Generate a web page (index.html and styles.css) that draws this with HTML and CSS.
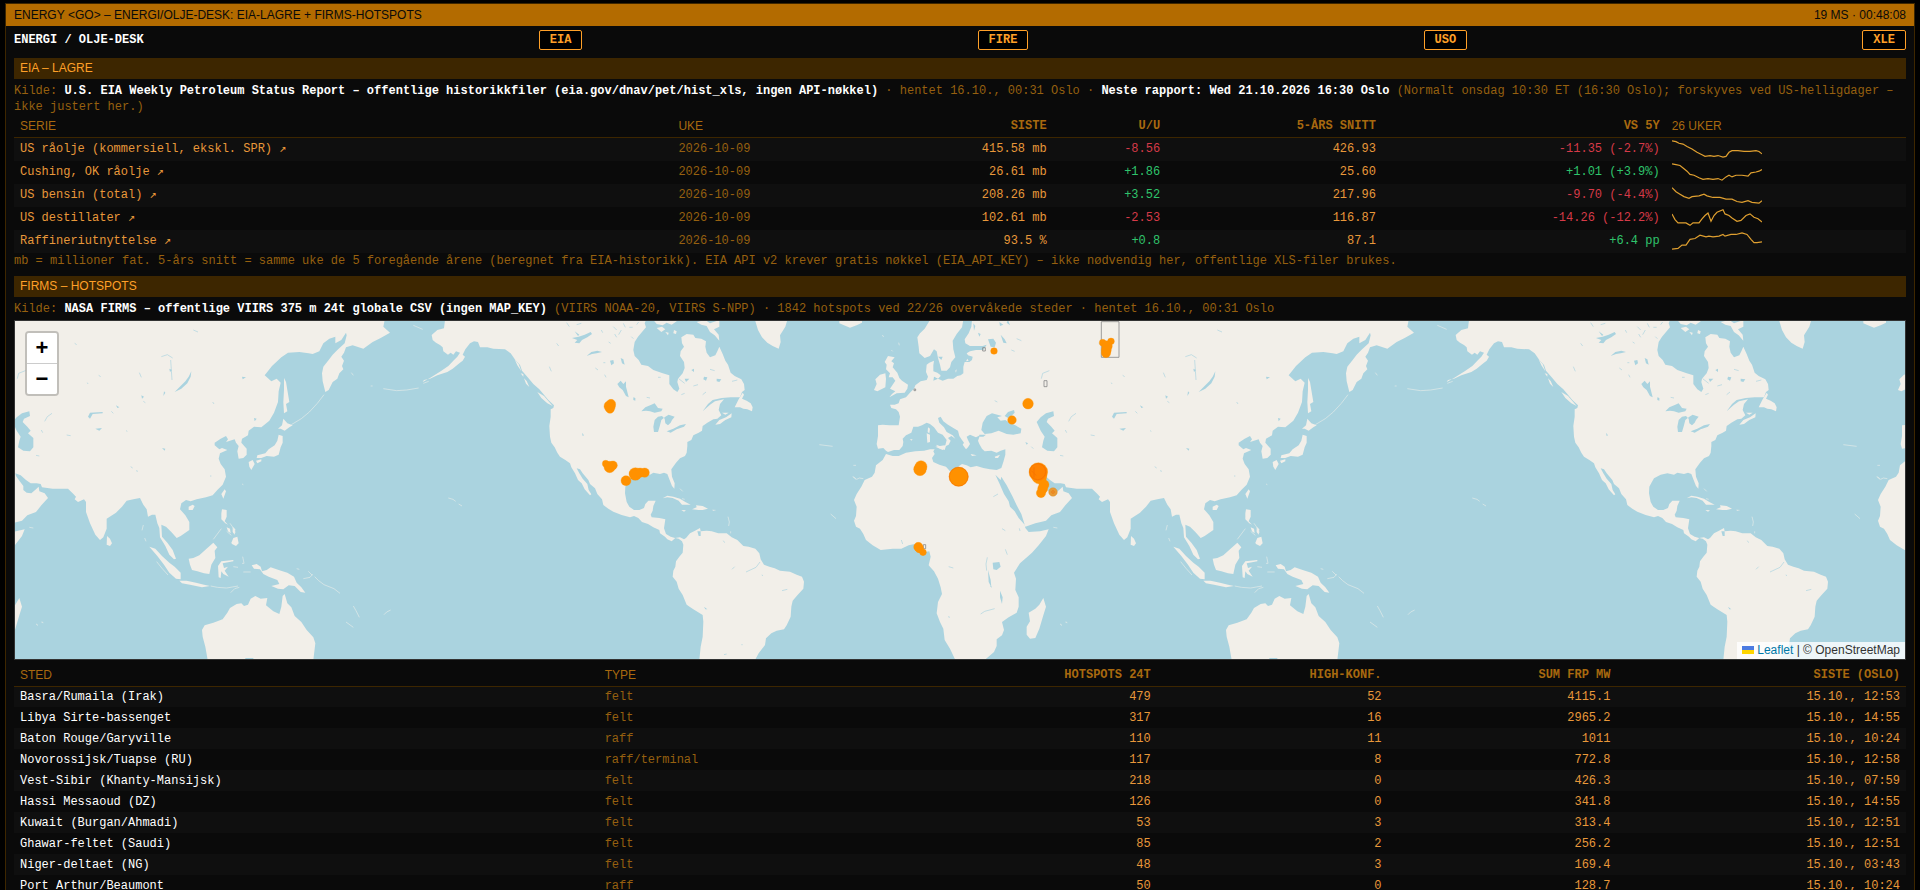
FILE: index.html
```html
<!DOCTYPE html>
<html lang="no">
<head>
<meta charset="utf-8">
<title>Energi / Olje-desk</title>
<link rel="stylesheet" href="styles.css">
</head>
<body>
<main class="panel">
  <header class="panel-head">
    <span>ENERGY &lt;GO&gt; – ENERGI/OLJE-DESK: EIA-LAGRE + FIRMS-HOTSPOTS</span>
    <span>19 MS · 00:48:08</span>
  </header>
  <div class="panel-body">
    <nav class="toolbar">
      <strong class="desk">ENERGI / OLJE-DESK</strong>
      <button type="button" class="chip">EIA</button>
      <button type="button" class="chip">FIRE</button>
      <button type="button" class="chip">USO</button>
      <button type="button" class="chip">XLE</button>
    </nav>

    <h2 class="section">EIA – LAGRE</h2>
    <p class="note">Kilde: <b>U.S. EIA Weekly Petroleum Status Report – offentlige historikkfiler (eia.gov/dnav/pet/hist_xls, ingen API-nøkkel)</b> · hentet 16.10., 00:31 Oslo · <b>Neste rapport: Wed 21.10.2026 16:30 Oslo</b> (Normalt onsdag 10:30 ET (16:30 Oslo); forskyves ved US-helligdager – ikke justert her.)</p>
    <table class="grid stocks">
      <colgroup><col class="c-serie"><col class="c-uke"><col class="c-siste"><col class="c-uu"><col class="c-avg"><col class="c-vs"><col class="c-spark"></colgroup>
      <thead><tr><th>SERIE</th><th>UKE</th><th class="num">SISTE</th><th class="num">U/U</th><th class="num">5-ÅRS SNITT</th><th class="num">VS 5Y</th><th>26 UKER</th></tr></thead>
      <tbody>
        <tr><td><a href="#crude">US råolje (kommersiell, ekskl. SPR) ↗</a></td><td class="dim">2026-10-09</td><td class="num">415.58 mb</td><td class="num down">-8.56</td><td class="num">426.93</td><td class="num down">-11.35 (-2.7%)</td>
          <td><svg class="spark" viewBox="0 0 90 22" preserveAspectRatio="none"><polyline points="0,1 4,2 7,4 11,5 15,8 20,11 25,15 30,18 33,20 38,19 42,20 46,19 51,21 54,20 57,15 60,13 66,13 72,14 78,14 84,13 87,14 90,17"/></svg></td></tr>
        <tr><td><a href="#cushing">Cushing, OK råolje ↗</a></td><td class="dim">2026-10-09</td><td class="num">26.61 mb</td><td class="num up">+1.86</td><td class="num">25.60</td><td class="num up">+1.01 (+3.9%)</td>
          <td><svg class="spark" viewBox="0 0 90 22" preserveAspectRatio="none"><polyline points="0,1 4,2 8,3 12,7 15,10 18,14 22,15 27,18 31,20 36,19 41,20 46,19 50,21 54,17 57,15 60,17 64,15 70,15 76,16 79,12 84,11 87,10 90,8"/></svg></td></tr>
        <tr><td><a href="#gasoline">US bensin (total) ↗</a></td><td class="dim">2026-10-09</td><td class="num">208.26 mb</td><td class="num up">+3.52</td><td class="num">217.96</td><td class="num down">-9.70 (-4.4%)</td>
          <td><svg class="spark" viewBox="0 0 90 22" preserveAspectRatio="none"><polyline points="0,2 4,7 8,10 12,13 17,15 20,13 27,12 32,10 35,12 41,14 48,14 54,16 60,16 65,19 70,20 76,18 80,20 87,21 90,18"/></svg></td></tr>
        <tr><td><a href="#distillate">US destillater ↗</a></td><td class="dim">2026-10-09</td><td class="num">102.61 mb</td><td class="num down">-2.53</td><td class="num">116.87</td><td class="num down">-14.26 (-12.2%)</td>
          <td><svg class="spark" viewBox="0 0 90 22" preserveAspectRatio="none"><polyline points="0,6 3,13 6,17 14,17 18,20 21,17 27,17 30,12 33,8 36,5 39,15 42,8 45,4 51,1 53,6 57,8 60,11 65,15 69,14 74,8 78,6 82,10 86,12 90,16"/></svg></td></tr>
        <tr><td><a href="#refinery">Raffineriutnyttelse ↗</a></td><td class="dim">2026-10-09</td><td class="num">93.5 %</td><td class="num up">+0.8</td><td class="num">87.1</td><td class="num up">+6.4 pp</td>
          <td><svg class="spark" viewBox="0 0 90 22" preserveAspectRatio="none"><polyline points="0,21 6,20 10,16 14,16 18,9 23,8 28,4 34,6 37,5 41,6 47,5 51,3 53,5 59,3 64,3 70,1 75,3 79,9 82,13 85,13 90,12"/></svg></td></tr>
      </tbody>
    </table>
    <p class="note">mb = millioner fat. 5-års snitt = samme uke de 5 foregående årene (beregnet fra EIA-historikk). EIA API v2 krever gratis nøkkel (EIA_API_KEY) – ikke nødvendig her, offentlige XLS-filer brukes.</p>

    <h2 class="section">FIRMS – HOTSPOTS</h2>
    <p class="note">Kilde: <b>NASA FIRMS – offentlige VIIRS 375 m 24t globale CSV (ingen MAP_KEY)</b> (VIIRS NOAA-20, VIIRS S-NPP) · 1842 hotspots ved 22/26 overvåkede steder · hentet 16.10., 00:31 Oslo</p>

    <div class="map">
      <svg class="world" viewBox="45 33 5670 1014" preserveAspectRatio="xMidYMid slice" role="img" aria-label="Verdenskart med hotspots">
        <defs>
          <g id="world">
            <g transform="translate(1440 0)">
              <path class="land" d="M-105,30 L-108,55 -128,60 -145,75 -142,90 -132,98 -120,105 -112,112 -110,124 -96,134 -88,128 -80,134 -72,124 -60,128 -68,140 -80,152 -95,168 -118,184 -150,204 -172,216 -168,210 -150,206 -128,196 -98,186 -82,176 -62,160 -52,152 -45,140 -52,134 -44,118 -30,100 -18,94 -6,96 0,112 22,112 40,116 75,118 92,130 106,150 120,165 126,182 145,204 160,222 178,238 190,252 205,270 222,286 220,294 212,298 212,320 208,348 210,380 214,398 224,412 232,428 240,440 256,450 270,460 274,472 285,490 294,510 305,520 314,538 330,556 334,553 326,540 322,522 308,506 298,490 290,475 300,478 308,490 325,510 330,522 345,535 352,552 366,568 370,585 385,596 400,605 425,615 450,622 462,618 475,624 486,636 504,642 520,652 538,660 540,670 555,680 562,688 575,694 586,684 596,686 606,694 610,704 608,728 598,740 588,754 586,770 580,782 578,800 590,815 596,836 608,855 620,884 640,898 668,915 670,935 668,980 662,1010 658,1050 L825,1050 836,1030 855,1005 858,985 874,970 890,962 912,958 920,946 932,920 934,890 938,872 952,856 970,836 972,815 966,800 950,794 930,785 900,782 884,775 868,770 852,764 842,748 838,730 826,716 806,710 790,708 772,690 755,682 740,670 715,670 695,664 680,662 662,664 660,654 645,662 630,670 618,684 612,688 600,682 585,684 572,680 558,672 552,655 556,628 538,624 515,622 512,614 518,602 520,588 527,572 505,572 496,582 492,594 478,600 462,600 448,590 440,576 435,550 436,530 444,515 450,505 470,494 490,490 510,494 520,488 540,492 552,488 562,492 568,508 576,528 583,536 584,520 576,500 574,478 588,458 600,445 615,438 620,428 622,408 622,396 634,390 640,376 656,368 666,362 668,348 682,338 700,328 712,326 724,316 716,300 720,282 732,268 705,274 690,284 668,304 684,282 698,270 725,264 752,262 780,262 786,246 794,240 792,222 784,208 764,198 752,188 744,164 736,152 728,132 718,110 712,124 706,136 690,142 680,128 676,110 678,94 664,86 646,84 640,74 620,72 604,82 606,100 612,110 602,124 600,138 612,156 614,174 608,190 594,206 592,216 598,236 592,246 580,238 568,222 568,196 548,190 520,180 504,168 484,164 476,150 464,138 460,120 464,96 474,80 486,66 498,52 494,40 498,30Z"/>
              <path class="land" d="M520,30 L530,42 548,46 560,38 575,44 590,34 592,30Z M530,54 l16,-4 10,8 -12,8z M556,66 l10,2 -2,8z M582,60 l8,4 -2,8 -8,-2z M650,36 L664,44 680,48 690,66 704,76 718,92 716,74 702,58 718,50 718,30 690,40 676,30Z"/>
              <path class="land" d="M764,292 L776,268 788,248 792,254 786,266 800,272 812,280 818,292 816,304 802,298 790,296 780,292Z M706,344 L718,330 738,322 755,310 754,322 736,330 720,342Z M726,308 l20,0 -10,6z"/>
              <path class="land" d="M825,30 L834,60 846,82 862,98 878,108 896,116 902,96 900,76 916,50 922,30Z M1078,40 L1092,46 1110,53 1130,46 1146,38 1146,30 1078,30Z"/>
              <path class="land" d="M548,565 L562,557 580,560 600,566 616,576 632,584 606,584 596,572 578,564 562,562Z M636,598 L650,592 648,586 668,588 684,596 668,600 656,600Z M604,600 l14,1 -6,4z M697,599 l12,1 -10,2z M584,526 l8,0z"/>
              <path class="isle" d="M600,536 l8,8 M606,566 l8,2 M744,620 l4,16 -2,12 M752,664 l0,6 M1052,612 l16,14 M1120,500 l10,8 8,-4 12,2 M1018,404 l40,5 M1120,466 l8,0"/>
              <path class="land" d="M132,205 l8,8 8,18 -10,-10z M172,246 l20,12 26,30 -16,-8 -18,-16z M104,148 l12,14 8,22 -12,-18z M122,190 l8,2 0,8z"/>
              <path class="water" d="M484,304 L496,292 514,284 524,280 534,294 548,296 544,304 524,308 510,304 498,302Z M546,318 L534,320 524,330 520,350 522,366 534,366 540,346 544,330 556,320 566,314 584,320 576,330 572,338 564,346 556,340 554,326Z M560,364 L580,356 600,346 618,342 612,350 590,358 572,368Z M412,222 L422,212 430,222 438,214 438,230 446,262 438,258 428,240 418,232Z M276,84 L296,80 314,74 332,66 336,72 322,82 306,90 298,100 284,98 292,90Z M320,138 L334,126 352,122 366,126 350,130 336,132Z M390,152 l10,-2 2,10 -8,6z M422,144 l8,4 4,16 -8,-4z M284,64 l14,10 -4,4z M460,262 l6,2 0,8 -6,-2z M672,200 l10,2 -4,10 -8,-4z M710,206 l14,2 -6,8 -8,-2z M614,206 l14,0 -10,10z M634,180 l8,-4 0,10z M672,890 l10,8 -6,0z M652,664 l10,0 0,14 -6,0z M306,368 l6,8 -4,2z"/>
              <path class="line" d="M230,100l6,8 M260,38l8,12 M400,50l10,10 M424,60l-8,14 M448,52l10,0 M454,80l6,6 M404,72l6,10 M370,158l6,0 M208,170l6,14 M346,174l8,6 M374,194l4,8 M596,206l18,14 M640,228l14,-4 M668,254l10,-8 M604,254l10,-4 M690,178l14,4 M756,214l16,-4 M534,202l8,0 M564,180l6,-6 M500,262l10,2 M798,786l30,-14 12,-16 M756,778l8,-8 M846,794l2,4 M906,842l16,-4 M730,692l4,6 M784,1004l4,0 M732,1034l8,-2 M290,44l14,-4 M430,40l6,12 M470,44l6,-8 M386,96l6,4 M364,60l4,8"/>
            </g>
            <g transform="translate(2550 0)">
              <path class="land" d="M366,30 L364,50 356,70 344,88 346,100 360,108 380,108 398,108 410,104 400,120 378,120 360,124 350,130 354,136 368,140 366,150 358,156 344,156 340,170 340,190 332,196 322,198 310,206 294,206 278,212 264,206 250,212 252,200 264,204 272,196 262,188 250,184 250,166 252,152 238,158 230,164 228,186 234,200 230,210 212,214 196,226 192,236 182,246 168,262 150,268 146,280 134,284 120,284 124,294 138,298 146,306 150,320 146,346 118,346 98,344 84,346 84,378 80,402 84,416 100,414 108,422 114,426 132,420 148,420 158,408 160,396 158,386 168,376 184,368 190,350 204,350 216,346 230,338 240,342 252,352 264,368 278,374 290,390 286,406 276,410 258,404 266,414 284,420 288,408 296,404 302,392 294,384 304,378 316,386 308,376 290,366 282,352 268,338 264,324 272,320 280,334 294,344 310,354 324,362 328,378 336,390 342,398 338,404 348,418 354,412 360,402 354,390 350,380 360,374 378,382 390,376 384,392 388,402 396,416 404,424 424,422 440,428 452,422 466,418 466,434 460,456 454,474 440,480 420,478 400,474 380,468 362,472 350,466 336,462 322,472 316,490 300,484 288,470 268,464 250,456 246,444 254,432 250,424 254,418 240,418 222,422 196,424 168,428 146,438 128,438 108,432 98,450 78,466 74,488 66,500 44,510 34,530 20,552 12,570 20,590 18,618 12,632 18,650 30,656 40,672 48,690 68,706 92,720 128,716 154,716 176,706 194,702 206,718 224,726 238,724 242,740 236,766 252,784 264,806 272,832 276,852 264,876 260,910 270,936 280,956 284,990 300,1016 316,1050 L404,1050 432,1026 440,1008 440,988 456,976 462,960 456,936 476,922 500,908 506,890 506,862 496,840 498,806 492,788 510,760 546,728 566,706 588,678 596,658 570,664 536,666 526,654 524,644 506,624 494,604 480,590 476,574 462,552 448,520 436,494 452,510 454,500 470,526 488,560 500,586 514,612 526,650 556,640 588,632 604,616 630,606 646,586 666,564 656,550 640,544 638,530 630,538 616,550 602,548 592,540 592,528 580,512 570,498 568,490 584,496 600,510 614,520 632,520 644,522 648,532 680,536 726,536 740,550 750,560 746,568 756,576 774,568 780,576 780,606 792,640 808,674 822,690 832,682 842,656 842,626 870,608 888,590 902,572 922,568 942,564 952,584 962,598 966,620 978,614 988,614 994,640 1000,654 1002,682 1018,708 1030,734 1044,748 1050,746 1040,720 1024,698 1008,680 1006,644 1020,650 1036,666 1052,684 1064,678 1078,668 1090,660 1090,636 1078,616 1062,598 1066,580 1080,570 1094,574 1112,568 1140,562 1160,556 1174,540 1190,524 1200,500 1196,478 1184,462 1178,446 1182,430 1204,420 1188,414 1180,418 1166,406 1166,398 1184,386 1200,378 1206,388 1200,396 1226,388 1230,398 1238,408 1234,424 1238,446 1252,444 1262,434 1262,416 1246,398 1248,386 1266,376 1268,362 1284,350 1306,352 1330,332 1344,308 1356,276 1358,244 1364,218 1352,206 1336,214 1316,196 1338,168 1366,142 1386,128 1420,126 1448,130 1460,132 1480,124 1492,100 1510,86 1528,80 1528,100 1546,90 1560,68 1562,76 1556,100 1534,120 1520,134 1508,150 1492,170 1488,190 1490,214 1498,246 1508,240 1520,216 1534,206 1540,190 1552,178 1548,168 1554,152 1546,140 1554,128 1560,112 1580,106 1612,116 1640,96 1664,84 1692,68 1672,50 1676,30Z"/>
              <path class="land" d="M240,30 L224,56 210,70 202,82 206,110 208,130 224,144 240,138 252,118 260,124 264,144 270,164 274,182 290,182 300,172 304,156 316,142 310,118 308,92 320,72 336,52 340,30Z"/>
              <path class="land" d="M104,156 L114,138 134,142 124,154 132,160 128,172 142,188 148,204 156,212 174,224 172,236 164,248 140,250 118,262 126,252 136,244 120,236 128,224 136,212 128,202 116,202 120,190 108,178 110,164Z M72,240 L80,222 76,208 90,194 106,190 108,206 106,232 94,238 82,244Z"/>
              <path class="land" d="M580,864 L588,890 580,916 568,956 556,984 540,986 530,974 530,950 540,934 536,908 556,896 568,884Z M230,370 l10,4 0,22 -8,2z M234,352 l6,4 -2,14 -5,-4z M256,410 L284,406 278,420Z M362,432 l18,4 -14,2z M434,440 l16,-6 -6,10 -8,0z M843,678 L852,686 858,700 852,708 842,704Z M262,192 l10,6 -8,8 -8,-4z M316,182 l4,-4 -2,10z M180,388l8,0 -4,4z M352,146l-4,8 8,-2z"/>
              <path class="water" d="M426,310 L410,318 398,338 394,360 404,372 424,370 446,362 470,372 490,374 512,370 514,356 496,346 478,338 466,330 452,332 442,322 456,318Z M464,318 L474,306 492,300 494,308 484,318 474,324Z M560,336 L572,322 588,310 610,304 612,318 594,326 590,336 604,350 614,362 606,370 622,384 622,412 612,424 592,422 576,412 580,392 584,380 572,362Z M388,374 l20,0 -8,6 -12,0z"/>
              <path class="water" d="M1096,184 L1094,200 1084,220 1066,236 1046,246 1060,232 1078,214 1088,200Z M786,320 L792,308 830,306 830,310 800,312 792,326Z M428,758 L448,756 452,770 440,780 430,778Z M414,88 L430,86 438,98 434,112 422,110Z M452,74 L464,88 470,100 460,98Z M264,140 l14,0 -4,10z M808,356 l20,-2 -8,8z M414,780 l8,30 2,22 -8,-16z M450,842 l8,20 -2,20 -6,-20z M1008,414 l10,2 -2,6z M1248,200 l12,2 -10,6z M1284,324 l8,2 -6,8z M946,256 l8,4 -6,6z M870,286 l10,6 -6,2z M1014,244 l4,4 -6,10z M1030,176 l8,4 -6,6z M526,396 l8,4 -4,4z M370,40l6,8-4,14z M448,36l12,8-10,4z M474,30l6,16-10-8z M384,68l8,4-4,8z"/>
              <path class="line" d="M656,334l8,-14 14,-10 M574,206l4,-16 20,-8 M1006,140l18,-6 16,10 M1034,150l4,60 M940,188l6,14 M862,310l-6,-6 M746,100l6,4 M412,742l-4,20 2,20 M420,828l6,4 M392,912l12,-8 30,-8 M430,560l14,-8 M466,718l6,16 M434,272l8,4 M544,410l6,6 M630,436l10,2 M722,375l12,2 M900,362l4,2 M914,470l6,4 M932,480l2,6 M1152,498l4,0 M646,360l4,8 M500,86l14,6 M484,120l10,4 M154,690l4,12 M296,770l14,4 M294,920l6,2 M456,656l10,6 M508,655l2,8 M818,196l6,4 M784,218l2,4 M952,274l6,4 M1102,60l14,6 M1160,276l4,6"/>
              <path class="isle" d="M96,76l6,4 M146,98l2,8 M124,120l4,4 M610,652l12,2 M632,944l4,2 M648,936l4,2 M8,500l10,8"/>
            </g>
            <g transform="translate(3072 0)">
              <path class="land" d="M623,1050 L616,1010 608,980 606,960 614,946 640,938 668,928 682,908 690,894 710,882 724,880 732,888 744,884 752,866 766,858 782,866 802,864 798,886 820,904 838,912 844,890 848,858 854,852 862,880 874,892 884,918 904,936 920,960 940,982 946,1000 940,1050Z"/>
              <path class="land" d="M755,766 L770,762 782,770 786,784 800,780 812,772 836,780 862,788 882,800 890,818 904,832 916,848 902,846 884,828 866,826 850,838 834,836 814,828 838,822 832,810 806,800 790,792 780,778 762,776Z M566,746 L580,744 598,736 618,718 640,698 652,712 644,722 646,744 634,764 628,792 612,790 592,784 576,780 570,764Z M448,710 L466,716 486,738 508,758 524,770 542,788 542,808 528,806 508,788 492,764 472,738Z M538,812 L560,812 588,818 612,824 630,828 606,832 570,824 546,820Z"/>
              <path class="land" d="M654,768 L664,754 700,750 700,754 668,760 672,774 684,770 674,782 686,800 670,792 664,784 662,804 656,802Z M666,598 L680,600 680,620 674,634 684,644 676,640 664,628 664,610Z M694,698 L700,684 712,680 716,700 708,708 696,702Z M680,652 l10,4 2,14 -8,-6z M698,650 l8,8 -2,16 -6,-8z M664,552 L674,538 678,544 670,566Z M566,590 l12,-6 6,4 -6,12 -12,0z"/>
              <path class="land" d="M834,356 L846,346 850,326 862,340 878,346 868,352 854,362 842,356Z M836,374 L848,378 848,398 842,412 836,434 822,440 800,438 784,444 770,444 772,436 796,430 806,418 824,406 832,392Z M746,456 L758,450 764,462 754,480 748,470Z M768,452 l16,-4 0,6 -12,6z M852,204 L858,216 862,240 868,276 858,282 862,304 852,310 850,276 852,240Z"/>
              <path class="isle" d="M640,688l24,-32 M632,828l20,4 28,2 34,-6 M692,848l12,-12 14,-4 M728,740l4,20 -6,0 M700,770l14,2 M730,786l22,0 M910,806l20,-4 8,-10 M890,776l8,2 M925,784l12,12 M944,800l12,12 16,12 30,12 18,14 M1038,936l22,16 M1060,888l8,14 10,20 M1152,914l8,-8 12,-6 M874,344l30,-18 24,-20 24,-26 20,-26 M430,645l-4,16 M434,684l4,10 M470,755l16,20 18,20 M1345,564l14,4 8,6 M1376,582l10,6 M1060,196l-6,-8 M1112,228l6,0 M1150,236l40,6 30,-2 36,-6 M1270,220l16,-6 M1240,46l28,12 M726,522l4,2 M690,640l10,14 6,14 M680,664l14,12 M108,942l4,2 M124,936l4,2"/>
              <path class="water" d="M736,1044l24,0 0,6 -24,0z M806,1006l4,2 M832,1032l4,2 M794,922l4,0 M734,956l4,2"/>
            </g>
          </g>
        </defs>
        <use href="#world" x="-3072"/>
        <use href="#world"/>
        <use href="#world" x="3072"/>
        <g class="box"><path d="M3304,35h53v107h-53z M3132,212h9v18h-9z M2948,113h8v10h-8z M2742,237h5v5h-5z M2770,704h7v12h-7z"/></g>
        <g class="hot">
          <circle cx="1833" cy="282" r="14"/><circle cx="1829" cy="289" r="17"/><circle cx="1830" cy="297" r="13"/>
          <circle cx="1817" cy="461" r="10"/><circle cx="1829" cy="471" r="17"/><circle cx="1839" cy="466" r="13"/>
          <circle cx="1878" cy="512" r="15"/><circle cx="1906" cy="492" r="19"/><circle cx="1920" cy="488" r="14"/><circle cx="1934" cy="488" r="14"/>
          <circle cx="2763" cy="470" r="18"/><circle cx="2760" cy="478" r="19"/>
          <circle cx="2876" cy="500" r="29"/>
          <circle cx="2755" cy="711" r="14"/><circle cx="2759" cy="717" r="12"/><circle cx="2769" cy="727" r="10"/>
          <circle cx="2982" cy="123" r="10"/><circle cx="3084" cy="281" r="16"/><circle cx="3036" cy="330" r="13"/>
          <circle cx="3308" cy="98" r="10"/><circle cx="3333" cy="94" r="10"/><circle cx="3321" cy="108" r="16"/><circle cx="3319" cy="120" r="15"/><circle cx="3318" cy="129" r="14"/>
          <circle cx="3115" cy="486" r="28"/><circle cx="3118" cy="500" r="22"/><circle cx="3132" cy="524" r="15"/><circle cx="3128" cy="536" r="15"/><circle cx="3123" cy="549" r="14"/>
          <circle cx="3159" cy="546" r="13" class="faint"/>
        </g>
        <circle class="core" cx="3115" cy="486" r="26"/>
        <g class="ring"><circle cx="2876" cy="500" r="28"/><circle cx="3113" cy="485" r="24"/><path d="M3102,472v30M3094,482l14,14"/><circle cx="3159" cy="546" r="4"/></g>
      </svg>
      <div class="zoomer">
        <button type="button" aria-label="Zoom inn">+</button>
        <button type="button" aria-label="Zoom ut">−</button>
      </div>
      <div class="credit"><a href="#leaflet"><svg class="flag" viewBox="0 0 12 8"><path fill="#4c7be1" d="M0 0h12v4H0z"/><path fill="#ffd500" d="M0 4h12v4H0z"/></svg> Leaflet</a> | © OpenStreetMap</div>
    </div>

    <table class="grid sites">
      <colgroup><col class="c-sted"><col class="c-type"><col class="c-hot"><col class="c-high"><col class="c-frp"><col class="c-last"></colgroup>
      <thead><tr><th>STED</th><th>TYPE</th><th class="num">HOTSPOTS 24T</th><th class="num">HIGH-KONF.</th><th class="num">SUM FRP MW</th><th class="num">SISTE (OSLO)</th></tr></thead>
      <tbody>
        <tr><td>Basra/Rumaila (Irak)</td><td class="dim">felt</td><td class="num">479</td><td class="num">52</td><td class="num">4115.1</td><td class="num">15.10., 12:53</td></tr>
        <tr><td>Libya Sirte-bassenget</td><td class="dim">felt</td><td class="num">317</td><td class="num">16</td><td class="num">2965.2</td><td class="num">15.10., 14:55</td></tr>
        <tr><td>Baton Rouge/Garyville</td><td class="dim">raff</td><td class="num">110</td><td class="num">11</td><td class="num">1011</td><td class="num">15.10., 10:24</td></tr>
        <tr><td>Novorossijsk/Tuapse (RU)</td><td class="dim">raff/terminal</td><td class="num">117</td><td class="num">8</td><td class="num">772.8</td><td class="num">15.10., 12:58</td></tr>
        <tr><td>Vest-Sibir (Khanty-Mansijsk)</td><td class="dim">felt</td><td class="num">218</td><td class="num">0</td><td class="num">426.3</td><td class="num">15.10., 07:59</td></tr>
        <tr><td>Hassi Messaoud (DZ)</td><td class="dim">felt</td><td class="num">126</td><td class="num">0</td><td class="num">341.8</td><td class="num">15.10., 14:55</td></tr>
        <tr><td>Kuwait (Burgan/Ahmadi)</td><td class="dim">felt</td><td class="num">53</td><td class="num">3</td><td class="num">313.4</td><td class="num">15.10., 12:51</td></tr>
        <tr><td>Ghawar-feltet (Saudi)</td><td class="dim">felt</td><td class="num">85</td><td class="num">2</td><td class="num">256.2</td><td class="num">15.10., 12:51</td></tr>
        <tr><td>Niger-deltaet (NG)</td><td class="dim">felt</td><td class="num">48</td><td class="num">3</td><td class="num">169.4</td><td class="num">15.10., 03:43</td></tr>
        <tr><td>Port Arthur/Beaumont</td><td class="dim">raff</td><td class="num">50</td><td class="num">0</td><td class="num">128.7</td><td class="num">15.10., 10:24</td></tr>
      </tbody>
    </table>
  </div>
</main>
</body>
</html>
```
FILE: styles.css
```css
:root {
  --amber: #ffa028;
  --amber-text: #e8983a;
  --amber-dim: #96600f;
  --line: #3d2600;
  --mono: "Liberation Mono", "DejaVu Sans Mono", monospace;
  --sans: "Liberation Sans", Arial, sans-serif;
}

* { box-sizing: border-box; }

html { height: 100%; overflow: hidden; background: #000; }

body {
  height: 100%;
  margin: 0;
  padding: 3px 5px 0;
  overflow: hidden;
  background: #000;
  color: var(--amber-text);
  font: 12px/16px var(--mono);
}

.panel {
  border: 1px solid var(--line);
  background: #0a0a0a;
}

.panel-head {
  display: flex;
  justify-content: space-between;
  padding: 0 8px;
  background: #b36b00;
  color: #0a0a0a;
  font: 12px/22px var(--sans);
  font-kerning: none;
}

.panel-body { padding: 4px 8px 0; }

.toolbar {
  display: flex;
  align-items: center;
  justify-content: space-between;
  margin-bottom: 8px;
}

.desk { color: #fff; }

.chip {
  height: 20px;
  padding: 0 10px;
  border: 1px solid var(--amber);
  border-radius: 2px;
  background: #000;
  color: var(--amber);
  font: bold 12px/16px var(--mono);
}

.section {
  margin: 0;
  padding: 0 6px;
  background: #3d2600;
  color: var(--amber);
  font: 12px/21px var(--sans);
}

.note {
  margin: 0;
  padding-top: 4px;
  color: var(--amber-dim);
}

.note b { color: #fff; }

.grid {
  width: 100%;
  table-layout: fixed;
  border-collapse: collapse;
}

.grid th,
.grid td {
  padding: 0 6px;
  text-align: left;
  white-space: nowrap;
}

.grid th {
  border-bottom: 1px solid var(--line);
  color: #a8690f;
  font: 12px/22px var(--sans);
}

.grid th.num { font: bold 12px/22px var(--mono); }
.grid .num { text-align: right; }
.grid tbody tr:nth-child(odd) { background: #0f0f0f; }
.grid a { color: inherit; text-decoration: none; }
.grid .dim { color: var(--amber-dim); }
.grid .up { color: #2fc46c; }
.grid .down { color: #d63a48; }

.stocks td { height: 23px; }
.stocks + .note { padding: 0 0 7px; }
.sites { margin-top: 1px; }
.sites td { height: 21px; color: var(--amber-text); }
.sites td:first-child { color: #fff; }
.sites th, .sites th.num { padding-top: 4px; line-height: 21px; }

.c-serie { width: 34.8%; }
.c-uke { width: 10%; }
.c-siste { width: 10.1%; }
.c-uu { width: 6%; }
.c-avg { width: 11.4%; }
.c-vs { width: 15%; }
.c-sted { width: 30.9%; }
.c-type { width: 14.5%; }
.c-hot { width: 15%; }
.c-high { width: 12.2%; }
.c-frp { width: 12.1%; }

.spark {
  display: block;
  width: 90px;
  height: 18px;
}

.spark polyline {
  fill: none;
  stroke: #e0a030;
  stroke-width: 1.2;
  vector-effect: non-scaling-stroke;
}

.map {
  position: relative;
  height: 340px;
  margin-top: 3px;
  border: 1px solid #333;
  background: #aad3df;
}

.world {
  display: block;
  width: 100%;
  height: 100%;
}

.land { fill: #f2efe9; }
.water { fill: #aad3df; }
.line { fill: none; stroke: #aad3df; stroke-width: 2; }
.isle { fill: none; stroke: #e6ece8; stroke-width: 2; }
.box { fill: none; stroke: #888; stroke-width: 3; opacity: 0.8; }
.hot { fill: #ff9100; stroke: #ff9100; stroke-width: 1; }
.hot .faint { fill: #e89a35; stroke: #d98a2c; }
.core { fill: #ff8200; }
.ring { fill: none; stroke: #f26a00; stroke-width: 3; opacity: 0.5; }

.zoomer {
  position: absolute;
  top: 10px;
  left: 10px;
  display: flex;
  flex-direction: column;
  border: 2px solid rgba(0, 0, 0, 0.2);
  border-radius: 4px;
  background-clip: padding-box;
}

.zoomer button {
  width: 30px;
  height: 30px;
  padding: 0;
  border: 0;
  background: #fff;
  color: #000;
  font: bold 22px/30px var(--sans);
}

.zoomer button:first-child {
  height: 31px;
  border-bottom: 1px solid #ccc;
  border-radius: 2px 2px 0 0;
}

.zoomer button:last-child { border-radius: 0 0 2px 2px; }

.credit {
  position: absolute;
  right: 0;
  bottom: 0;
  padding: 0 5px;
  background: rgba(255, 255, 255, 0.8);
  color: #333;
  font: 12px/17px var(--sans);
}

.credit a { color: #0078a8; text-decoration: none; }
.flag { width: 12px; height: 8px; }
```
